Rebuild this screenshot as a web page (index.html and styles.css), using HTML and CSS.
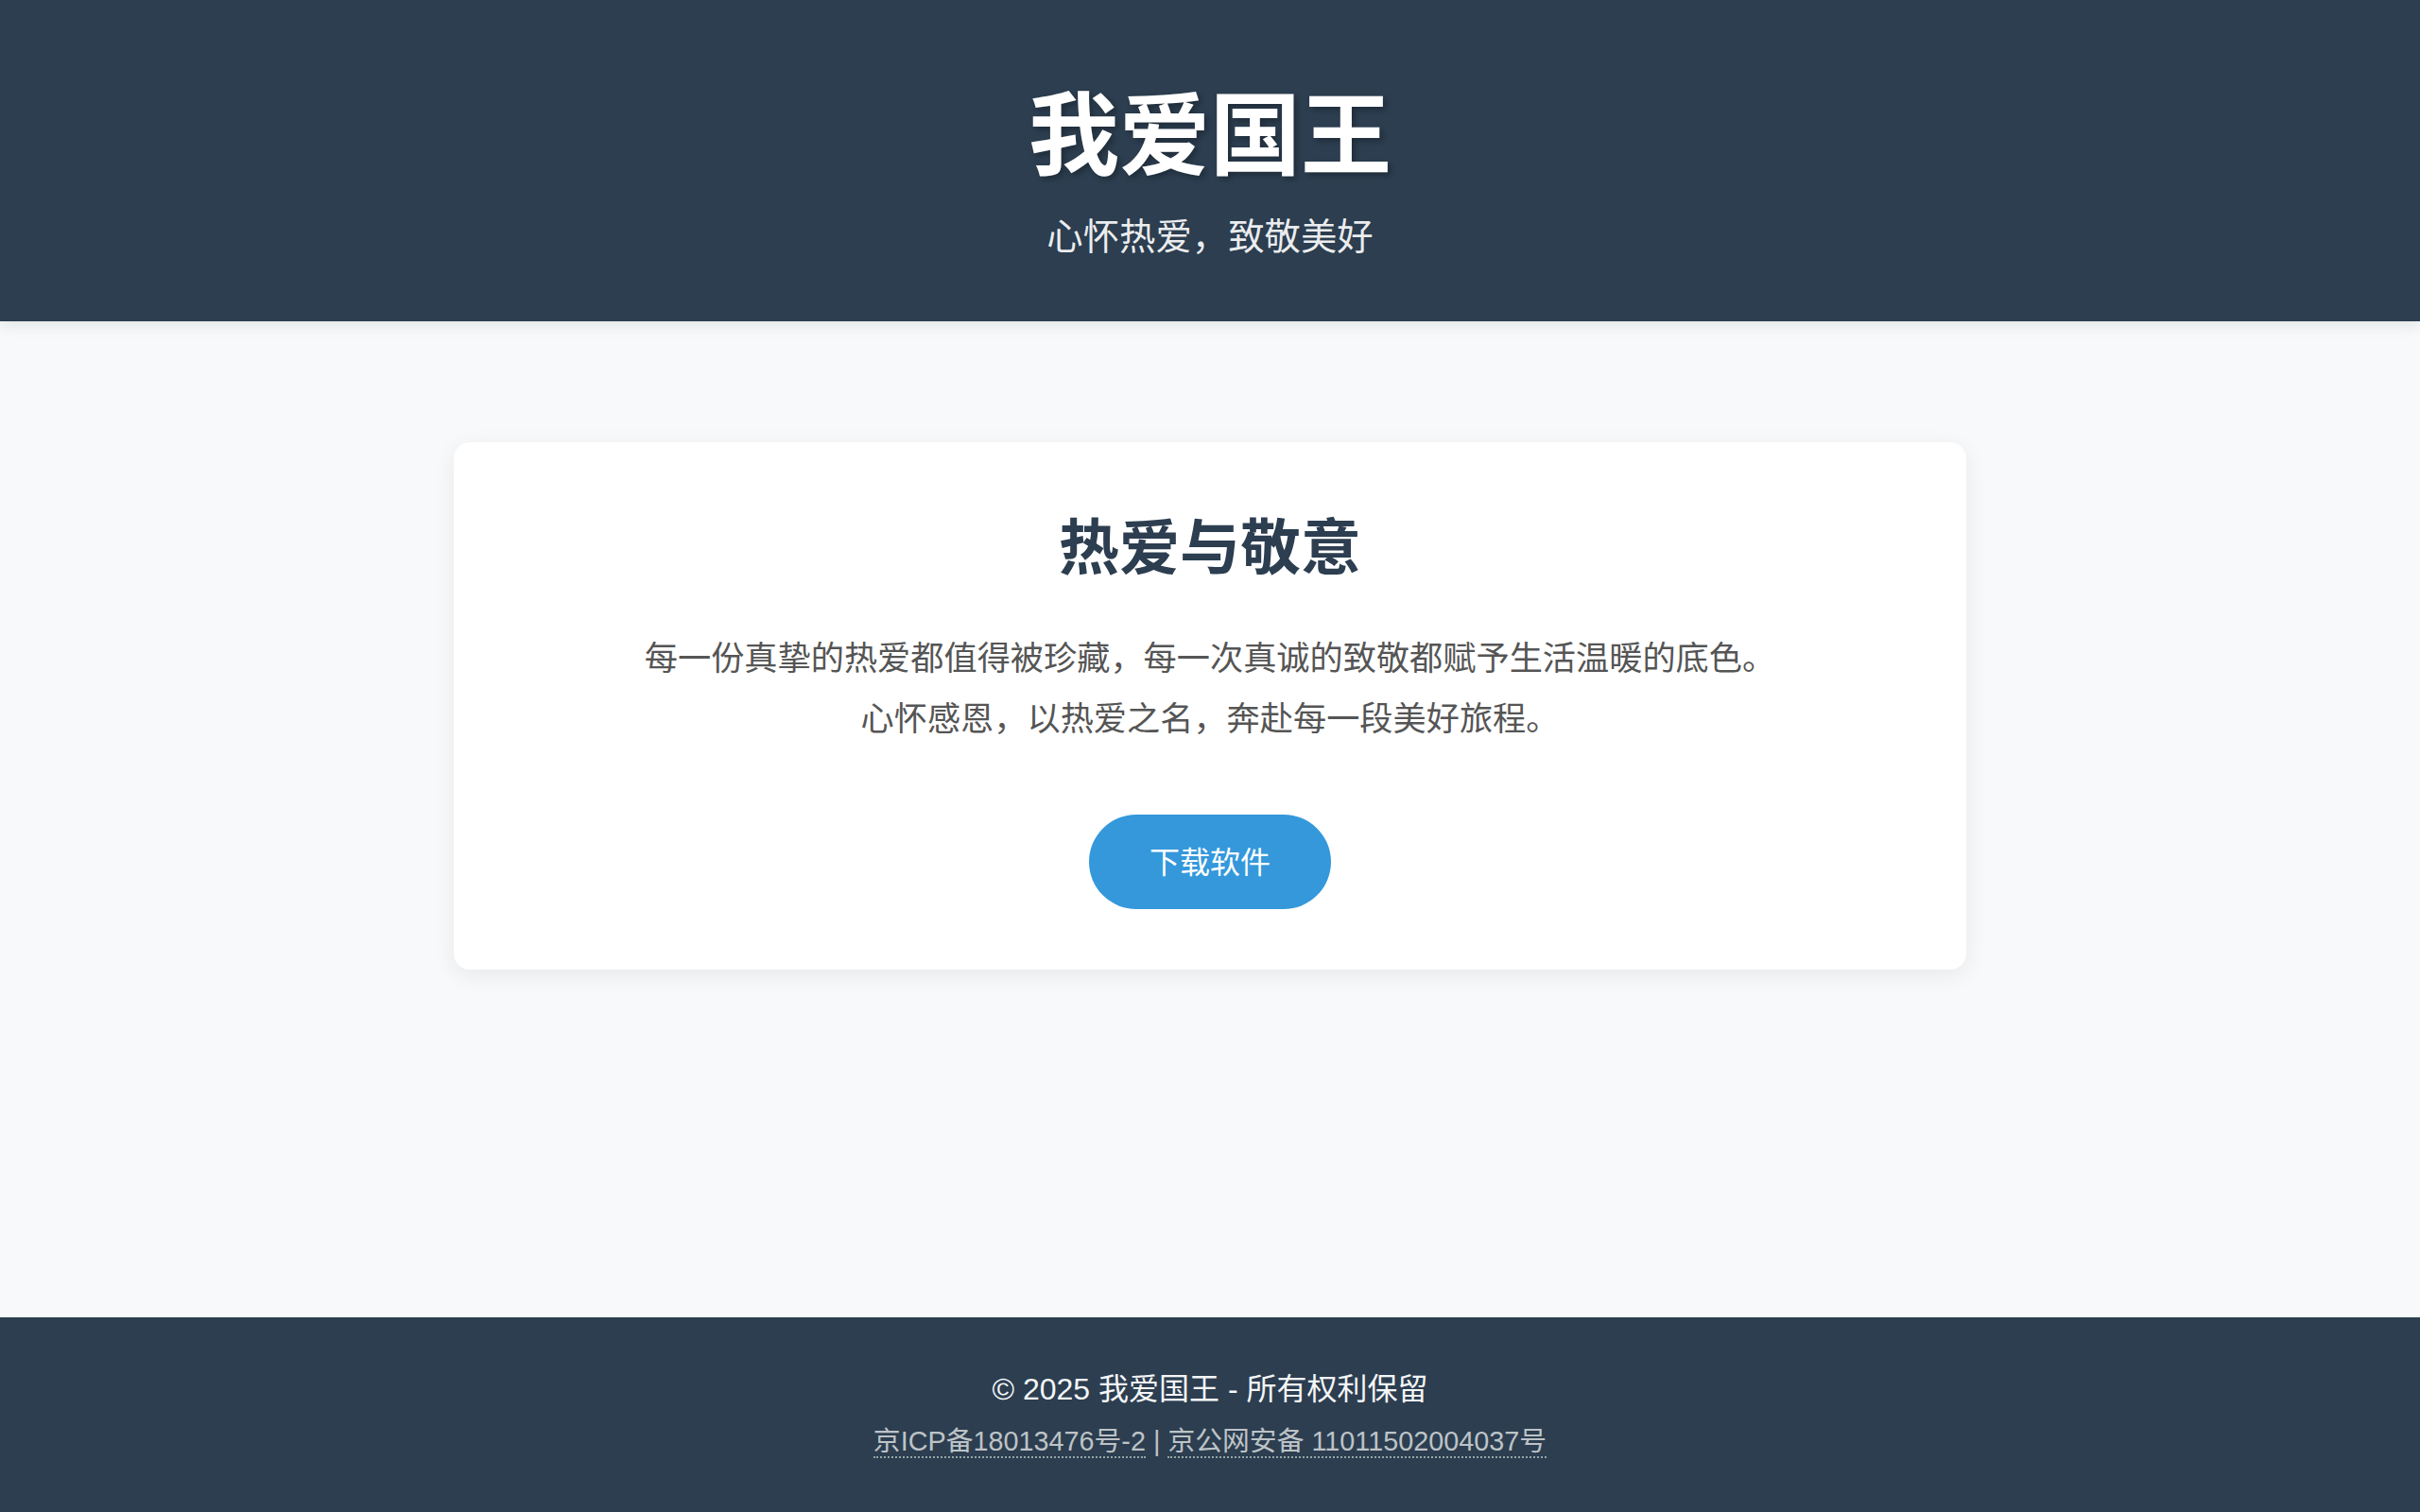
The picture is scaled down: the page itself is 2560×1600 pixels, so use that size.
FILE: index.html
```html
<!DOCTYPE html>
<html lang="zh-CN">
<head>
<meta charset="utf-8">
<title>我爱国王</title>
<link rel="stylesheet" href="styles.css">
</head>
<body>
<header class="site-header">
  <h1 class="site-title">我爱国王</h1>
  <p class="site-tagline">心怀热爱，致敬美好</p>
</header>
<main class="site-main">
  <section class="card">
    <h2 class="card-title">热爱与敬意</h2>
    <p class="card-text">每一份真挚的热爱都值得被珍藏，每一次真诚的致敬都赋予生活温暖的底色。<br>心怀感恩，以热爱之名，奔赴每一段美好旅程。</p>
    <a class="btn" href="#">下载软件</a>
  </section>
</main>
<footer class="site-footer">
  <p class="copyright">© 2025 我爱国王 - 所有权利保留</p>
  <p class="beian"><a class="beian-link" href="#">京ICP备18013476号-2</a> | <a class="beian-link" href="#">京公网安备 11011502004037号</a></p>
</footer>
</body>
</html>
```
FILE: styles.css
```css
* { box-sizing: border-box; }
html, body { margin: 0; padding: 0; }
body {
  font-family: "Liberation Sans", "Noto Sans CJK SC", sans-serif;
  background: #f8f9fa;
  min-height: 100vh;
  display: flex;
  flex-direction: column;
}
.site-header {
  background: #2c3e50;
  color: #fff;
  text-align: center;
  padding: 90px 0 61px;
  box-shadow: 0 3px 16px rgba(0,0,0,0.1);
  position: relative;
  z-index: 1;
}
.site-title {
  margin: 0;
  font-size: 96px;
  line-height: 108px;
  font-weight: 700;
  text-shadow: 3px 3px 6px rgba(0,0,0,0.3);
}
.site-tagline {
  margin: 25px 0 0;
  font-size: 38.4px;
  line-height: 56px;
  color: rgba(255,255,255,0.92);
}
.site-main {
  flex: 1;
  padding: 128px 0;
  display: flex;
  justify-content: center;
  align-items: flex-start;
}
.card {
  width: 1600px;
  background: #fff;
  border-radius: 17px;
  box-shadow: 0 6px 24px rgba(0,0,0,0.07);
  padding: 64px 64px 64px;
  text-align: center;
  display: flex;
  flex-direction: column;
  align-items: center;
}
.card-title {
  margin: 0 0 37px;
  font-size: 64px;
  line-height: 96px;
  font-weight: 700;
  color: #2c3e50;
}
.card-text {
  margin: 0 0 69px;
  font-size: 35.2px;
  line-height: 64px;
  color: #555;
}
.btn {
  display: inline-block;
  background: #3498db;
  color: #fff;
  text-decoration: none;
  font-size: 32px;
  line-height: 58px;
  padding: 22px 64px 20px;
  border-radius: 60px;
}
.site-footer {
  background: #2c3e50;
  color: #fff;
  text-align: center;
  padding: 52px 0 55px;
}
.copyright {
  margin: 0;
  font-size: 32px;
  line-height: 48px;
  color: #f4f6f7;
}
.beian {
  margin: 11px 0 0;
  font-size: 28.8px;
  line-height: 40px;
  color: #bdc3c7;
}
.beian-link {
  color: #bdc3c7;
  text-decoration: none;
  border-bottom: 2px dotted #95a5a6;
}
```
